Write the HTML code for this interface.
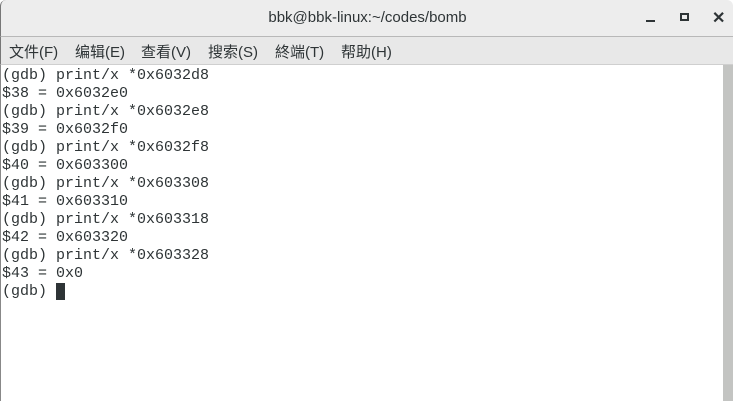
<!DOCTYPE html>
<html><head><meta charset="utf-8"><style>
*{margin:0;padding:0;box-sizing:border-box}
body{width:733px;height:401px;overflow:hidden;background:#fff;position:relative;font-family:"Liberation Sans","Noto Sans CJK SC",sans-serif}
#title{position:absolute;left:0;top:0;width:733px;height:37px;background:#ededed;border-bottom:1px solid #b8b8b8;border-radius:6px 6px 0 0;border-left:1px solid #777}
#title .t{position:absolute;left:0;width:733px;top:9px;text-align:center;font-size:15px;color:#2e3436}
#menu{position:absolute;left:0;top:37px;width:733px;height:28px;background:#e8e8e8;border-bottom:1px solid #cfcfcf;border-left:1px solid #777;font-size:15px;color:#2e3436}
#menu span{position:absolute;top:4px}
#term{position:absolute;left:0;top:65px;width:723px;height:336px;border-left:1px solid #888;font-family:"Liberation Mono",monospace;font-size:15px;line-height:18px;color:#2e3436;white-space:pre;padding-left:1px;padding-top:2px}
#sb{position:absolute;left:723px;top:65px;width:10px;height:336px;background:#c3c4c2}
.cur{display:inline-block;width:9px;height:17px;background:#2e3436;vertical-align:top}
</style></head><body>
<div id="title"><div class="t">bbk@bbk-linux:~/codes/bomb</div>
<div style="position:absolute;left:645px;top:20px;width:9px;height:2px;background:#2e3436"></div>
<div style="position:absolute;left:679px;top:13px;width:9px;height:8px;border:2px solid #2e3436"></div>
<div style="position:absolute;left:711px;top:8px;font-size:16px;font-weight:bold;color:#2e3436">✕</div>
</div>
<div id="menu"><span style="left:8px">文件(F)</span><span style="left:74px">编辑(E)</span><span style="left:140px">查看(V)</span><span style="left:207px">搜索(S)</span><span style="left:274px">終端(T)</span><span style="left:340px">帮助(H)</span></div>
<div id="term">(gdb) print/x *0x6032d8
$38 = 0x6032e0
(gdb) print/x *0x6032e8
$39 = 0x6032f0
(gdb) print/x *0x6032f8
$40 = 0x603300
(gdb) print/x *0x603308
$41 = 0x603310
(gdb) print/x *0x603318
$42 = 0x603320
(gdb) print/x *0x603328
$43 = 0x0
(gdb) <span class="cur"></span></div>
<div id="sb"></div>
</body></html>
